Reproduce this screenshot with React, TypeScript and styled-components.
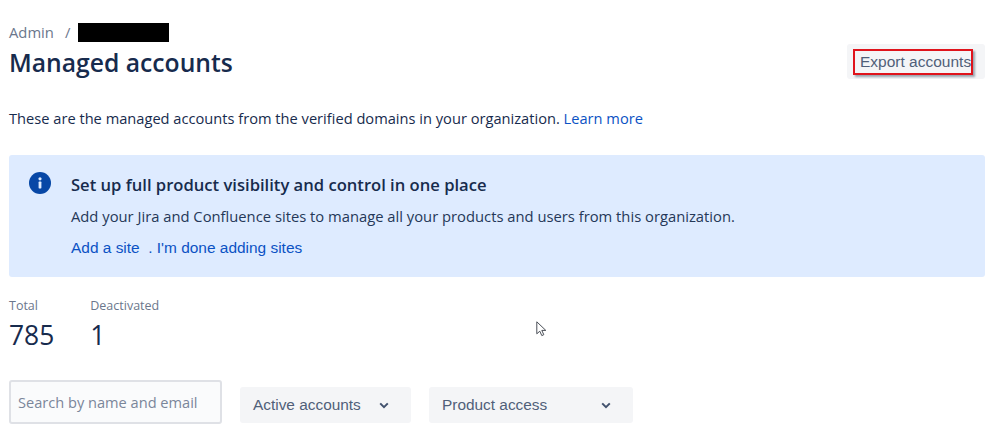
import React from "react";
import styled, { createGlobalStyle } from "styled-components";

const Global = createGlobalStyle`
  html, body { margin: 0; padding: 0; background: #fff; }
  body { font-family: "Open Sans", "Noto Sans", sans-serif; color: #172b4d; }
`;

const Page = styled.div`
  position: relative;
  width: 999px;
  height: 434px;
  overflow: hidden;
  box-sizing: border-box;
  padding: 22px 14px 0 9px;
`;

const Header = styled.header`
  display: flex;
  justify-content: space-between;
  align-items: flex-start;
`;

const Crumbs = styled.nav`
  display: flex;
  align-items: center;
  height: 20px;
  font-size: 14.8px;
  color: #6b778c;
`;

const Sep = styled.span`
  margin: 0 8px 0 11px;
`;

const Redacted = styled.span`
  width: 91px;
  height: 19px;
  background: #000;
`;

const Title = styled.h1`
  margin: 4px 0 0;
  font-size: 24.7px;
  line-height: 34px;
  font-weight: 600;
  color: #172b4d;
  letter-spacing: 0;
`;

const ExportWrap = styled.div`
  margin-top: 22px;
  width: 138px;
  height: 35px;
  box-sizing: border-box;
  padding: 5px 0 0 6px;
  background: #f4f5f7;
  border-radius: 3px;
`;

const ExportButton = styled.button`
  display: block;
  width: 120px;
  height: 26px;
  padding: 0 0 0 5px;
  box-sizing: border-box;
  background: #f4f5f7;
  border: 2px solid #e0141c;
  box-shadow: 2px 2px 2px #9aa3ad;
  font-family: "Liberation Sans", Arial, sans-serif;
  font-size: 15.5px;
  text-align: left;
  white-space: nowrap;
  color: #505f79;
`;

const Description = styled.p`
  margin: 28px 0 0;
  font-size: 14.65px;
  line-height: 20px;
  color: #172b4d;
`;

const Link = styled.a`
  color: #0b52c4;
`;

const Banner = styled.section`
  display: flex;
  gap: 20px;
  margin-top: 27px;
  height: 122px;
  box-sizing: border-box;
  padding: 17px 0 0 20px;
  background: #deebff;
  border-radius: 3px;
`;

const InfoIcon = styled.svg`
  flex: none;
  width: 22px;
  height: 22px;
`;

const BannerBody = styled.div`
  display: flex;
  flex-direction: column;
`;

const BannerTitle = styled.h2`
  margin: 0;
  font-size: 16.6px;
  line-height: 26px;
  font-weight: 600;
  color: #172b4d;
`;

const BannerText = styled.p`
  margin: 8px 0 0;
  font-size: 14.78px;
  line-height: 20px;
  color: #253858;
`;

const BannerLinks = styled.div`
  margin-top: 12px;
  font-family: "Liberation Sans", Arial, sans-serif;
  font-size: 15.45px;
  line-height: 20px;
  color: #0b52c4;
  white-space: pre;
`;

const Stats = styled.div`
  display: flex;
  gap: 36px;
  margin-top: 20px;
`;

const Stat = styled.div`
  display: flex;
  flex-direction: column;
`;

const StatLabel = styled.span`
  font-size: 12.5px;
  line-height: 18px;
  color: #6b778c;
`;

const StatValue = styled.span`
  margin-top: 3px;
  font-size: 26.4px;
  line-height: 34px;
  color: #172b4d;
`;

const Filters = styled.div`
  display: flex;
  align-items: flex-start;
  margin-top: 28px;
`;

const Search = styled.div`
  width: 213px;
  height: 44px;
  box-sizing: border-box;
  border: 2px solid #dfe1e6;
  border-radius: 3px;
  background: #fafbfc;
  padding: 0 0 0 7px;
  display: flex;
  align-items: center;
  font-size: 14.6px;
  color: #7a869a;
  white-space: nowrap;
`;

const Select = styled.div<{ $width: number; $left: number }>`
  display: flex;
  align-items: center;
  justify-content: space-between;
  width: ${(p) => p.$width}px;
  height: 36px;
  margin: 7px 0 0 ${(p) => p.$left}px;
  box-sizing: border-box;
  padding: 0 22px 0 13px;
  background: #f4f5f7;
  border-radius: 3px;
  font-family: "Liberation Sans", Arial, sans-serif;
  font-size: 15.4px;
  color: #505f79;
`;

const Chevron = styled.svg`
  width: 10px;
  height: 7px;
`;

const Cursor = styled.svg`
  position: absolute;
  left: 536px;
  top: 321px;
  width: 11px;
  height: 16px;
`;

const Caret = () => (
  <Chevron viewBox="0 0 10 7">
    <path d="M1.2 1.4 5 5.2l3.8-3.8" fill="none" stroke="#42526e" strokeWidth="2" />
  </Chevron>
);

export default function App() {
  return (
    <Page>
      <Global />
      <Header>
        <div>
          <Crumbs>
            Admin<Sep>/</Sep>
            <Redacted />
          </Crumbs>
          <Title>Managed accounts</Title>
        </div>
        <ExportWrap>
          <ExportButton>Export accounts</ExportButton>
        </ExportWrap>
      </Header>
      <Description>
        These are the managed accounts from the verified domains in your organization. <Link>Learn more</Link>
      </Description>
      <Banner>
        <InfoIcon viewBox="0 0 22 22">
          <circle cx="11" cy="11" r="11" fill="#0747a6" />
          <rect x="9.6" y="9.6" width="2.8" height="6.8" rx="0.6" fill="#deebff" />
          <circle cx="11" cy="6.8" r="1.6" fill="#deebff" />
        </InfoIcon>
        <BannerBody>
          <BannerTitle>Set up full product visibility and control in one place</BannerTitle>
          <BannerText>Add your Jira and Confluence sites to manage all your products and users from this organization.</BannerText>
          <BannerLinks>Add a site  . I'm done adding sites</BannerLinks>
        </BannerBody>
      </Banner>
      <Stats>
        <Stat>
          <StatLabel>Total</StatLabel>
          <StatValue>785</StatValue>
        </Stat>
        <Stat>
          <StatLabel>Deactivated</StatLabel>
          <StatValue>1</StatValue>
        </Stat>
      </Stats>
      <Filters>
        <Search>Search by name and email</Search>
        <Select $width={171} $left={18}>
          Active accounts
          <Caret />
        </Select>
        <Select $width={204} $left={18}>
          Product access
          <Caret />
        </Select>
      </Filters>
      <Cursor viewBox="0 0 11 16">
        <path d="M.8.8v12l3-2.6 2 4.4 2-.9-2-4.3h4z" fill="#fff" stroke="#4a4f57" strokeWidth="1" strokeLinejoin="round" />
      </Cursor>
    </Page>
  );
}
